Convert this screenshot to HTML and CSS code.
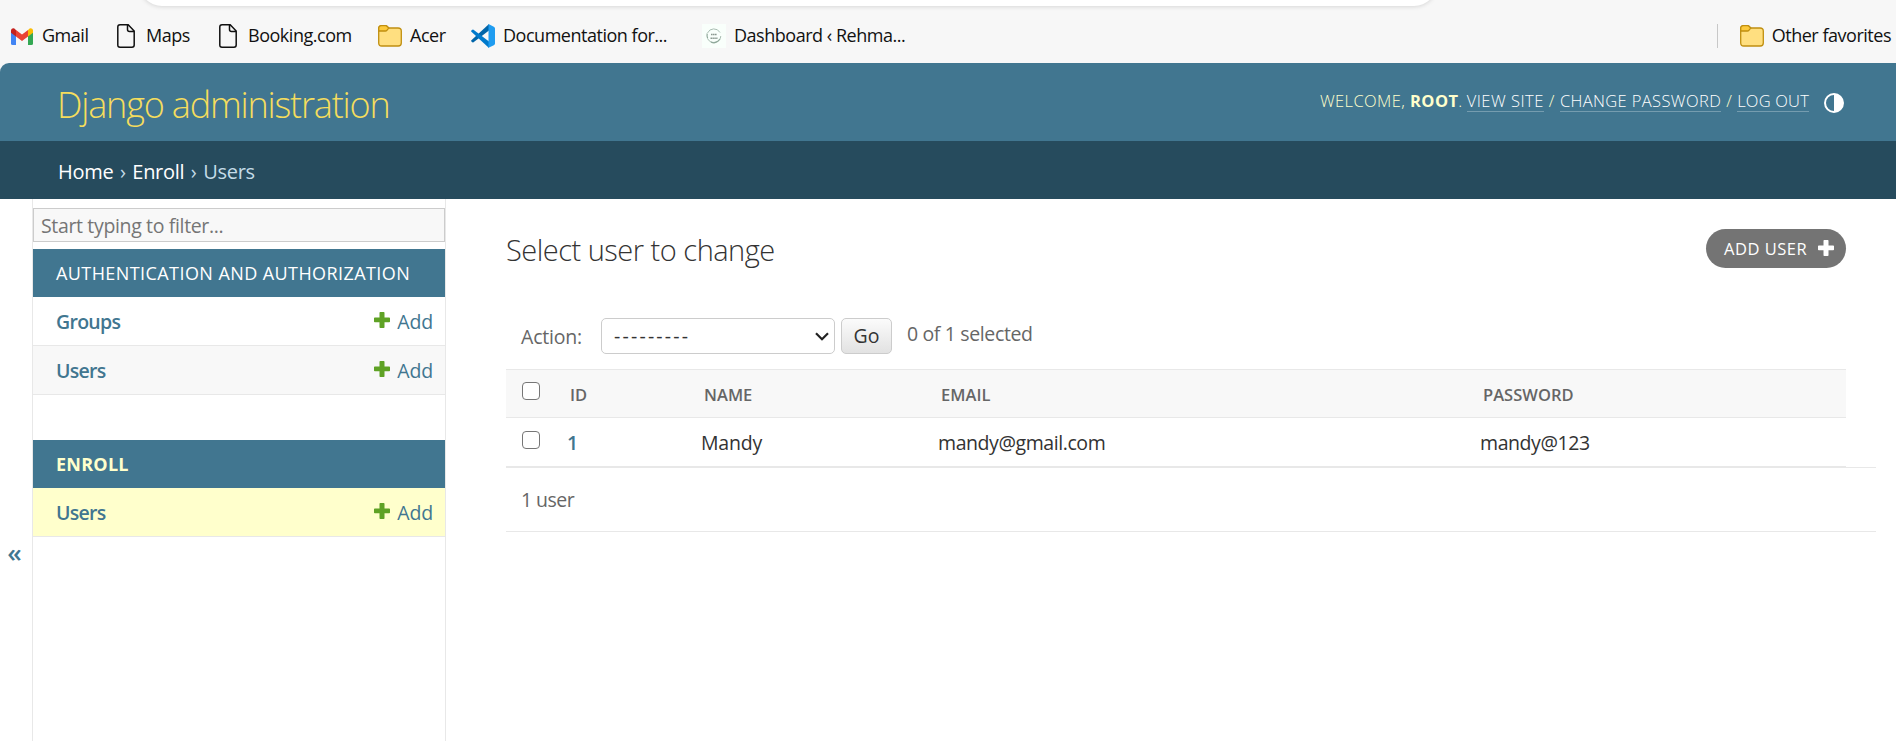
FILE: index.html
```html
<!DOCTYPE html>
<html lang="en">
<head>
<meta charset="utf-8">
<title>Select user to change | Django site admin</title>
<link rel="stylesheet" href="styles.css">
</head>
<body>
<svg class="defs" width="0" height="0" aria-hidden="true">
  <symbol id="plus" viewBox="0 0 16 16"><path d="M6.3 0h3.4q.8 0 .8.8v4.7h4.7q.8 0 .8.8v3.2q0 .8-.8.8h-4.7v4.9q0 .8-.8.8H6.3q-.8 0-.8-.8v-4.9H.8q-.8 0-.8-.8V6.300q0-.8.8-.8h4.700V.8q0-.8.8-.8z"/></symbol>
  <symbol id="page" viewBox="0 0 18 24"><path d="M3 .8h8.200L17.200 7v14q0 2.200-2.200 2.200H3Q.8 23.200.8 21V3Q.8.8 3 .8zM10.500 1v4.500q0 2 2 2H17" fill="none" stroke="#111" stroke-width="1.500"/></symbol>
  <symbol id="folder" viewBox="0 0 24 22"><path d="M.7 3.500Q.7.7 3.500.7h4q1 0 1.700.8L10.800 3H20q3.300 0 3.300 3v12q0 3-3 3H3.700q-3 0-3-3z" fill="#ffdf80" stroke="#c08f10" stroke-width="1.300"/><path d="M.7 3.500Q.7.7 3.500.7h4q1 0 1.700.8L10.800 3 9 5.200q-.7.800-1.700.8H.8z" fill="#fcca3c" stroke="#c08f10" stroke-width="1.300"/></symbol>
</svg>

<nav class="bookmarks">
  <div class="address-bar"></div>
  <a class="bookmark gmail"><svg width="22" height="17" viewBox="0 0 22 17"><path d="M0 2v13.500Q0 17 1.500 17H5V6.500z" fill="#4285f4"/><path d="M22 2v13.500q0 1.500-1.500 1.500H17V6.500z" fill="#34a853"/><path d="M17 2.200V8.500l5-3.800V2.500q0-2-2-2.300-1.200-.2-2 .8z" fill="#fbbc04"/><path d="M5 2.200V8.500L0 4.700V2.500Q0 .5 2 .2 3.200 0 4 1z" fill="#c5221f"/><path d="M5 2v6.500l6 4.500 6-4.500V2l-6 4.500z" fill="#ea4335"/></svg><span>Gmail</span></a>
  <a class="bookmark maps"><svg width="18" height="24"><use href="#page"/></svg><span>Maps</span></a>
  <a class="bookmark booking"><svg width="18" height="24"><use href="#page"/></svg><span>Booking.com</span></a>
  <a class="bookmark acer"><svg width="24" height="22"><use href="#folder"/></svg><span>Acer</span></a>
  <a class="bookmark docs"><svg width="24" height="24" viewBox="0 0 24 24"><path d="M18 0v6.500L2.500 18.300q-.6.400-1.100 0l-1-.9q-.6-.6 0-1.200z" fill="#0065a9"/><path d="M18 24v-6.500L2.500 5.700q-.6-.4-1.100 0l-1 .9q-.6.600 0 1.200z" fill="#007acc"/><path d="M17.500.3v23.400L22.800 21.300q1.200-.5 1.200-1.800V4.500q0-1.300-1.200-1.800L18 .2z" fill="#1f9cf0"/></svg><span>Documentation for...</span></a>
  <a class="bookmark dash"><svg width="24" height="24" viewBox="0 0 24 24"><path d="M0 0h24v24H0z" fill="#f9fffb"/><path d="M5.500 9A7 7 0 0 1 18 8.500M18.800 12a7 7 0 0 1-13 3" fill="none" stroke="#a9bdb2" stroke-width="1"/><path d="M5.200 9.500q-.6 2.700.5 5M9 18q5 2.500 9-3" fill="none" stroke="#8fa89a" stroke-width="1.200"/><path d="M9 10.500h6M8.500 14.300h7" stroke="#8b9991" stroke-width="1.600" stroke-dasharray="1.500 .4"/></svg><span>Dashboard ‹ Rehma...</span></a>
  <a class="bookmark other"><svg width="24" height="22"><use href="#folder"/></svg><span>Other favorites</span></a>
</nav>

<div class="app">
  <header class="header">
    <h1 class="brand">Django administration</h1>
    <div class="user-tools">
      <span class="welcome">Welcome,</span><strong>root</strong><span class="dot">.</span>
      <a class="view">View site</a><i>/</i><a class="change">Change password</a><i>/</i><a class="logout">Log out</a>
      <svg class="theme" width="20" height="20" viewBox="0 0 20 20"><circle cx="10" cy="10" r="9" fill="none" stroke="#fff" stroke-width="2"/><path d="M10 1a9 9 0 0 1 0 18z" fill="#fff"/></svg>
    </div>
  </header>
  <div class="breadcrumbs"><a>Home</a><span>›</span><a class="enroll">Enroll</a><span>›</span><b>Users</b></div>

  <div class="main">
    <button class="toggle">«</button>
    <aside class="sidebar">
      <input class="filter" placeholder="Start typing to filter...">
      <section class="module">
        <h2 class="caption">Authentication and Authorization</h2>
        <div class="model"><a class="name">Groups</a><a class="add"><svg width="16" height="16"><use href="#plus"/></svg>Add</a></div>
        <div class="model alt"><a class="name">Users</a><a class="add"><svg width="16" height="16"><use href="#plus"/></svg>Add</a></div>
      </section>
      <section class="module">
        <h2 class="caption current">Enroll</h2>
        <div class="model current"><a class="name">Users</a><a class="add"><svg width="16" height="16"><use href="#plus"/></svg>Add</a></div>
      </section>
    </aside>

    <main class="content">
      <div class="title-row">
        <h2 class="title">Select user to change</h2>
        <a class="add-user"><span>Add user</span><svg width="16" height="16"><use href="#plus"/></svg></a>
      </div>
      <div class="actions">
        <label>Action:</label>
        <div class="select"><span>---------</span><svg width="14" height="9" viewBox="0 0 14 9"><path d="M1 1.200l6 6 6-6" fill="none" stroke="#222" stroke-width="2.200"/></svg></div>
        <button class="go">Go</button>
        <span class="counter">0 of 1 selected</span>
      </div>
      <div class="results">
        <div class="row head"><i class="check"></i><span>ID</span><span>Name</span><span>Email</span><span>Password</span></div>
        <div class="row"><i class="check"></i><a>1</a><span>Mandy</span><span class="email">mandy@gmail.com</span><span class="pw">mandy@123</span></div>
      </div>
      <p class="paginator">1 user</p>
    </main>
  </div>
</div>
</body>
</html>
```
FILE: styles.css
```css
* { box-sizing: border-box; }
body {
  margin: 0;
  height: 741px;
  overflow: hidden;
  background: #f7f7f7;
  color: #333;
  font: 19.5px/24px "Open Sans", "Noto Sans", sans-serif;
  white-space: nowrap;
}
h1, h2, p { margin: 0; font-weight: 400; }
i { font-style: normal; }
svg { display: block; flex: none; }
.defs { position: absolute; }

/* Browser bookmarks bar */
.bookmarks {
  position: relative;
  display: flex;
  align-items: center;
  height: 63px;
  padding: 9px 5px 0 11px;
  color: #111;
  font-size: 18px;
  letter-spacing: -.48px;
}
.address-bar {
  position: absolute;
  top: -40px;
  left: 139px;
  width: 1298px;
  height: 46px;
  border-radius: 23px;
  background: #fff;
  box-shadow: 0 1px 4px rgba(0, 0, 0, .13);
}
.bookmark { display: flex; align-items: center; }
.bookmark span { margin-top: -2px; }
.gmail { width: 106px; gap: 9px; }
.maps { width: 102px; gap: 11px; }
.booking { width: 159px; gap: 11px; }
.acer { width: 93px; gap: 8px; }
.docs { width: 231px; gap: 8px; }
.dash { gap: 8px; }
.other { position: relative; margin-left: auto; gap: 8px; }
.other::before {
  content: "";
  width: 1px;
  height: 24px;
  margin-right: 14px;
  background: #c8c8c8;
}

/* Header */
.app {
  height: 678px;
  overflow: hidden;
  border-radius: 9px 0 0 0;
  background: #fff;
}
.header {
  display: flex;
  align-items: center;
  justify-content: space-between;
  height: 78px;
  padding: 0 52px 0 57px;
  background: #417690;
  color: #ffc;
}
.brand {
  padding-top: 5px;
  color: #f5dd5d;
  font-size: 36px;
  font-weight: 300;
  line-height: 44px;
  letter-spacing: -1.18px;
}
.user-tools {
  display: flex;
  align-items: center;
  font-size: 16.5px;
  font-weight: 300;
  line-height: 20px;
  text-transform: uppercase;
  letter-spacing: .38px;
}
.user-tools > * { margin-top: -2px; }
.user-tools a {
  padding-top: 1px;
  border-bottom: 1px solid rgba(255, 255, 255, .28);
  color: #fff;
}
.user-tools strong { margin-left: 5px; font-weight: 700; }
.user-tools .dot { margin-right: 4px; }
.user-tools .view { letter-spacing: .5px; }
.user-tools .logout { letter-spacing: .2px; }
.user-tools i { width: 16px; text-align: center; }
.user-tools .theme { margin: 2px 0 0 15px; }
.breadcrumbs {
  display: flex;
  align-items: center;
  height: 58px;
  padding: 3px 0 0 58px;
  background: #264b5d;
  color: #c4dce8;
  font-size: 20px;
  letter-spacing: -.3px;
}
.breadcrumbs a { color: #fff; }
.breadcrumbs span { width: 19px; text-align: center; }
.breadcrumbs b { font-weight: 400; }

/* Sidebar */
.main { display: flex; height: 542px; }
.toggle {
  width: 32px;
  padding: 0 3px 0 0;
  border: 0;
  background: none;
  color: #417690;
  font: 600 26px/30px "Open Sans", sans-serif;
  align-self: flex-start;
  margin-top: 338px;
}
.sidebar {
  width: 414px;
  padding-top: 9px;
  border: solid #e8e8e8;
  border-width: 0 1px;
}
.filter {
  display: block;
  width: 100%;
  height: 34px;
  margin-bottom: 7px;
  padding: 1px 7px 0;
  border: 1px solid #ccc;
  border-radius: 0;
  background: #f8f8f8;
  font: 19.5px "Open Sans", sans-serif;
  letter-spacing: -.35px;
}
.filter::placeholder { color: #757575; }
.module { margin-bottom: 45px; }
.caption {
  height: 48px;
  padding-left: 23px;
  background: #417690;
  color: #fff;
  font-size: 18px;
  line-height: 48px;
  text-transform: uppercase;
  letter-spacing: .42px;
}
.caption.current { color: #ffc; font-weight: 700; letter-spacing: .25px; }
.model {
  display: flex;
  justify-content: space-between;
  height: 49px;
  padding: 0 12px 0 23px;
  border-bottom: 1px solid #e8e8e8;
  color: #417690;
  line-height: 50px;
}
.model.alt { background: #f8f8f8; }
.model.current { background: #ffc; }
.name { font-weight: 600; letter-spacing: -.7px; }
.add { display: flex; gap: 7px; letter-spacing: -.15px; }
.add svg { margin-top: 15px; fill: #5fa225; }

/* Change list */
.content { flex: 1; padding: 30px 20px 0 60px; }
.title-row {
  display: flex;
  justify-content: space-between;
  height: 89px;
  padding-right: 30px;
}
.title {
  font-size: 29px;
  font-weight: 300;
  line-height: 42px;
  letter-spacing: -.5px;
}
.add-user {
  display: flex;
  align-items: center;
  width: 140px;
  height: 39px;
  padding-left: 18px;
  border-radius: 20px;
  background: #747474;
  color: #fff;
  font-size: 16.5px;
  text-transform: uppercase;
  letter-spacing: .5px;
}
.add-user svg { margin: -2px 0 0 11px; fill: #fff; }
.actions {
  display: flex;
  height: 51px;
  padding-left: 15px;
  color: #666;
}
.actions label { width: 80px; line-height: 38px; letter-spacing: -.2px; }
.select {
  display: flex;
  align-items: center;
  justify-content: space-between;
  width: 234px;
  height: 36px;
  padding: 0 5px 0 12px;
  border: 1px solid #ccc;
  border-radius: 5px;
  color: #333;
  letter-spacing: 2.2px;
}
.go {
  width: 51px;
  height: 36px;
  margin: 0 15px 0 6px;
  padding: 0;
  border: 1px solid #ccc;
  border-radius: 5px;
  background: linear-gradient(#fbfbfb, #e2e2e2);
  color: #333;
  font: 19.5px/34px "Open Sans", sans-serif;
}
.counter { line-height: 32px; letter-spacing: -.36px; }
.results { width: 1340px; }
.row {
  display: grid;
  grid-template-columns: 61px 134px 237px 542px 1fr;
  height: 49px;
  border-bottom: 1px solid #e8e8e8;
  line-height: 50px;
}
.row a { color: #417690; font-weight: 600; }
.row span { letter-spacing: -.2px; }
.row .email, .row .pw { letter-spacing: -.42px; }
.row.head {
  border-top: 1px solid #e8e8e8;
  background: #f8f8f8;
  color: #666;
  font-size: 16.5px;
  font-weight: 600;
  line-height: 49px;
  text-transform: uppercase;
}
.row.head span { padding-left: 3px; letter-spacing: .03px; }
.check {
  width: 18px;
  height: 18px;
  margin: 13px 0 0 16px;
  border: 1.5px solid #767676;
  border-radius: 4px;
  background: #fff;
}
.head .check { margin-top: 12px; }
.paginator {
  height: 65px;
  padding-left: 15px;
  border: solid #e8e8e8;
  border-width: 1px 0;
  color: #666;
  line-height: 64px;
  letter-spacing: -.55px;
}
```
